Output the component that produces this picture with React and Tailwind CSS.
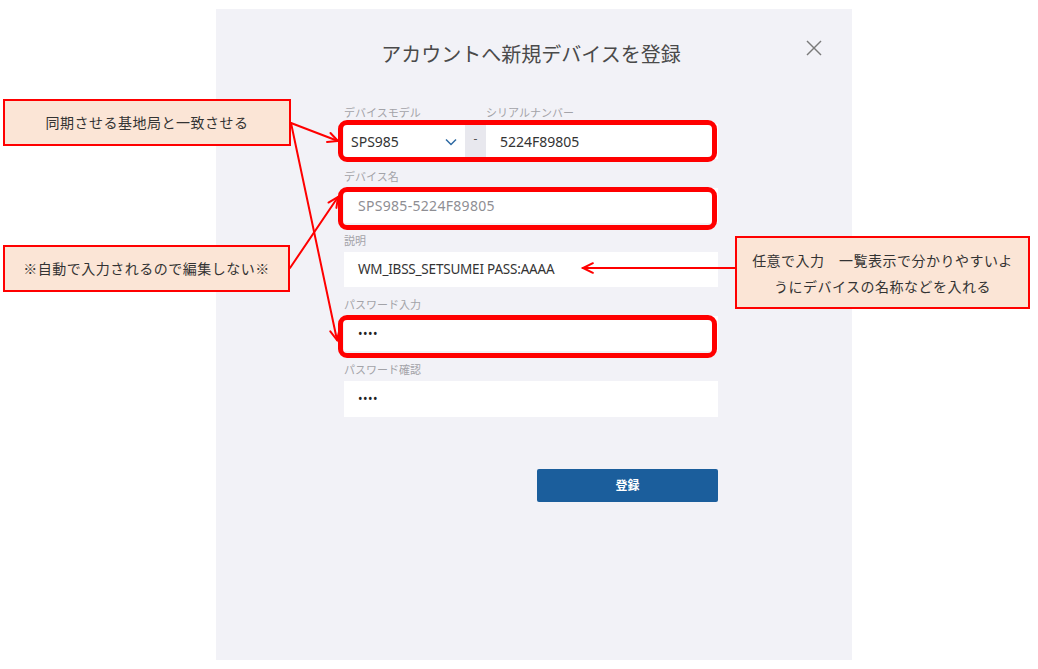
import React from "react";

const FONT = { fontFamily: '"Noto Sans", "Noto Sans CJK JP", sans-serif' };
const NOTE_FONT = { fontFamily: '"Noto Sans CJK JP", "Noto Sans", sans-serif' };

function Arrow({ x1, y1, x2, y2 }) {
  const ang = Math.atan2(y2 - y1, x2 - x1);
  const len = 11;
  const spread = 0.45;
  const a1x = x2 - len * Math.cos(ang - spread);
  const a1y = y2 - len * Math.sin(ang - spread);
  const a2x = x2 - len * Math.cos(ang + spread);
  const a2y = y2 - len * Math.sin(ang + spread);
  return (
    <g stroke="#ff0000" strokeWidth="2" fill="none" strokeLinecap="round">
      <line x1={x1} y1={y1} x2={x2} y2={y2} />
      <polyline points={`${a1x},${a1y} ${x2},${y2} ${a2x},${a2y}`} />
    </g>
  );
}

function Label({ children }) {
  return <div className="text-[11px] leading-[14px] text-[#a3a3a8] mb-[4px]">{children}</div>;
}

export default function App() {
  return (
    <div className="relative w-[1038px] h-[669px] bg-white overflow-hidden flex" style={FONT}>
      {/* Dialog panel */}
      <div className="relative ml-[216px] mt-[9px] w-[636px] h-[651px] bg-[#f2f2f7] pl-[128px] pt-[32px]">
        <button className="absolute right-[30px] top-[31px] w-[16px] h-[16px]">
          <svg viewBox="0 0 16 16" width="16" height="16" stroke="#7a7a7a" strokeWidth="1.4" fill="none">
            <line x1="1" y1="1" x2="15" y2="15" />
            <line x1="15" y1="1" x2="1" y2="15" />
          </svg>
        </button>
        <div className="w-[374px] flex flex-col">
          <h1 className="text-center text-[20px] leading-[28px] text-[#4a4a4a] font-normal">
            アカウントへ新規デバイスを登録
          </h1>

          <div className="mt-[37px] flex flex-col gap-[11px]">
            {/* Row 1 */}
            <div className="flex">
              <div className="w-[121px]">
                <Label>デバイスモデル</Label>
                <div className="h-[35px] bg-white flex items-center justify-between pl-[7px] pr-[8px]">
                  <span className="text-[14px] text-[#333]">SPS985</span>
                  <svg width="12" height="8" viewBox="0 0 12 8" fill="none" stroke="#2e6aa3" strokeWidth="1.5">
                    <polyline points="1,1.5 6,6.5 11,1.5" />
                  </svg>
                </div>
              </div>
              <div className="w-[21px]">
                <div className="h-[14px] mb-[4px]" />
                <div className="h-[35px] bg-[#e8e8ee] flex items-start justify-center pt-[6px] text-[12px] text-[#555]">-</div>
              </div>
              <div className="flex-1">
                <Label>シリアルナンバー</Label>
                <div className="h-[35px] bg-white flex items-center pl-[14px] text-[14px] text-[#333]">5224F89805</div>
              </div>
            </div>

            <div>
              <Label>デバイス名</Label>
              <div className="h-[35px] bg-white flex items-center pl-[14px] text-[14px] tracking-[0.3px] text-[#8e8e93]">SPS985-5224F89805</div>
            </div>

            <div>
              <Label>説明</Label>
              <div className="h-[35px] bg-white flex items-center pl-[14px] text-[13.5px] tracking-[-0.2px] text-[#333]">WM_IBSS_SETSUMEI PASS:AAAA</div>
            </div>

            <div>
              <Label>パスワード入力</Label>
              <div className="h-[35px] bg-white flex items-center pl-[14px] text-[12px] tracking-[0.5px] text-[#222]">••••</div>
            </div>

            <div className="mt-[1px]">
              <Label>パスワード確認</Label>
              <div className="h-[36px] bg-white flex items-center pl-[14px] text-[12px] tracking-[0.5px] text-[#222]">••••</div>
            </div>
          </div>

          <div className="mt-[52px] flex justify-end">
            <button className="w-[181px] h-[33px] bg-[#1b5e9c] rounded-[2px] text-white text-[12px] font-bold">登録</button>
          </div>
        </div>
      </div>

      {/* Red highlight overlays */}
      <div className="absolute left-[338px] top-[120px] w-[379px] h-[42px] border-[5px] border-[#ff0000] rounded-[9px]" />
      <div className="absolute left-[338px] top-[187px] w-[379px] h-[43px] border-[5px] border-[#ff0000] rounded-[9px]" />
      <div className="absolute left-[338px] top-[315px] w-[379px] h-[43px] border-[5px] border-[#ff0000] rounded-[9px]" />

      {/* Callout notes */}
      <div
        className="absolute left-[3px] top-[99px] w-[288px] h-[47px] bg-[#fbe5d6] border-2 border-[#ff0000] flex items-center justify-center text-[14px] tracking-[0.5px] text-[#333]"
        style={NOTE_FONT}
      >
        同期させる基地局と一致させる
      </div>
      <div
        className="absolute left-[3px] top-[245px] w-[287px] h-[47px] bg-[#fbe5d6] border-2 border-[#ff0000] flex items-center justify-center text-[14px] tracking-[0.5px] text-[#333]"
        style={NOTE_FONT}
      >
        ※自動で入力されるので編集しない※
      </div>
      <div
        className="absolute left-[735px] top-[236px] w-[295px] h-[73px] bg-[#fbe5d6] border-2 border-[#ff0000] flex flex-col items-center justify-center text-[14px] tracking-[0.5px] leading-[26px] text-[#333]"
        style={NOTE_FONT}
      >
        <span>任意で入力　一覧表示で分かりやすいよ</span>
        <span>うにデバイスの名称などを入れる</span>
      </div>

      {/* Arrows */}
      <svg className="absolute left-0 top-0 pointer-events-none" width="1038" height="669">
        <Arrow x1={291} y1={123} x2={338} y2={141} />
        <Arrow x1={291} y1={123} x2={337} y2={340} />
        <Arrow x1={290} y1={268} x2={338} y2={197} />
        <Arrow x1={735} y1={268} x2={583} y2={268} />
      </svg>
    </div>
  );
}
